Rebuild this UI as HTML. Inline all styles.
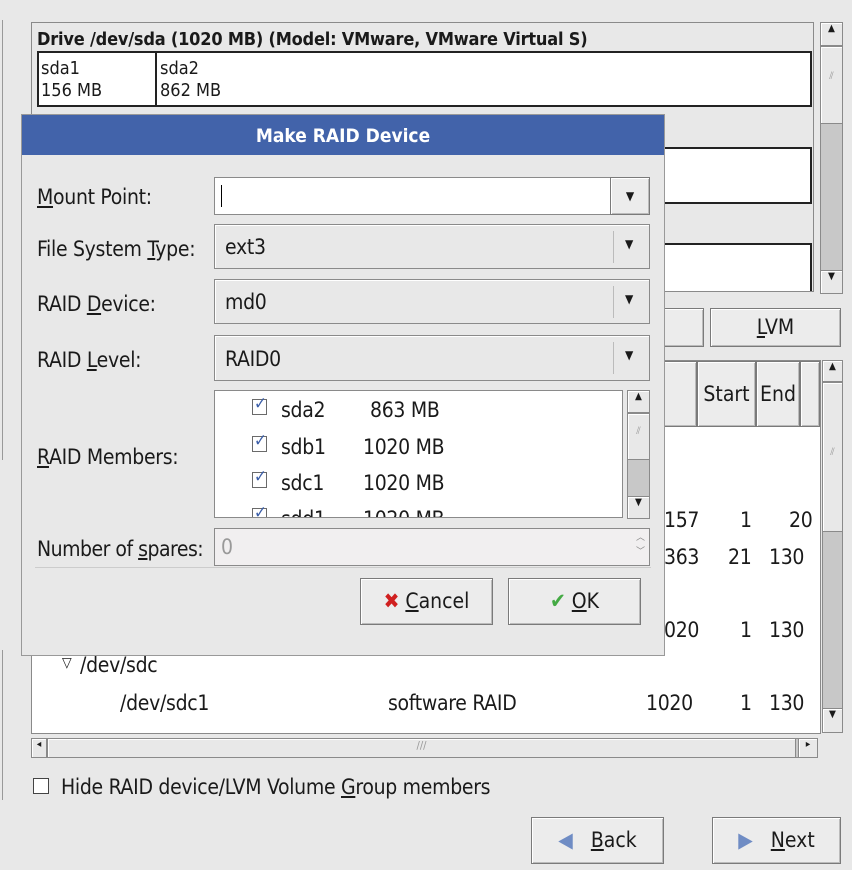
<!DOCTYPE html>
<html><head><style>
*{box-sizing:border-box;margin:0;padding:0}
body{width:852px;height:870px;background:#e8e8e8;position:relative;overflow:hidden;font-family:"DejaVu Sans","Liberation Sans",sans-serif;font-stretch:condensed;font-size:21px;color:#1a1a1a}
.a{position:absolute}
.white{background:#fff}
.bx{border:1px solid #8a8a8a}
.btn{position:absolute;border:1px solid #7a7a7a;background:#ececec;box-shadow:inset 1px 1px 0 #fff,inset -1px -1px 0 #bbb;text-align:center}
.t{position:absolute;white-space:nowrap;line-height:24px;letter-spacing:-0.3px}
.sm{font-size:18px;letter-spacing:0px}
u{text-decoration:underline}
.combo{position:absolute;border:1px solid #8a8a8a;background:#e8e8e8;box-shadow:inset 1px 1px 0 #fff}
.arr{position:absolute;font-size:12px;font-weight:bold}
.sb{position:absolute;background:#c8c8c8;border:1px solid #8a8a8a}
.sbb{position:absolute;background:#e8e8e8;border:1px solid #8a8a8a;box-shadow:inset 1px 1px 0 #fff;font-size:10px;text-align:center}
.cb{position:absolute;width:15px;height:16px;border:1px solid #6a6a6a;background:#fff}
.cb::after{content:"✓";position:absolute;left:1px;top:-6px;font-size:17px;color:#3b5ea8;font-weight:bold}
</style></head><body>
<div class="a" style="left:2px;top:20px;width:1px;height:440px;background:#999"></div>
<div class="a" style="left:2px;top:650px;width:1px;height:150px;background:#999"></div>
<div class="a bx" style="left:31px;top:22px;width:783px;height:270px;background:#e8e8e8"></div>
<div class="t sm" style="left:37px;top:28px;font-weight:bold;letter-spacing:-0.2px">Drive /dev/sda (1020 MB) (Model: VMware, VMware Virtual S)</div>
<div class="a white" style="left:37px;top:51px;width:775px;height:56px;border:2px solid #222"></div>
<div class="a" style="left:155px;top:51px;width:2px;height:56px;background:#222"></div>
<div class="t sm" style="left:41px;top:58px;line-height:22px">sda1<br>156 MB</div>
<div class="t sm" style="left:160px;top:58px;line-height:22px">sda2<br>862 MB</div>
<div class="a white" style="left:660px;top:147px;width:152px;height:57px;border:2px solid #222"></div>
<div class="a white" style="left:660px;top:243px;width:152px;height:48px;border:2px solid #222;border-bottom:none"></div>
<div class="sb" style="left:820px;top:22px;width:23px;height:272px"></div>
<div class="sbb" style="left:820px;top:22px;width:23px;height:24px">▲</div>
<div class="sbb" style="left:820px;top:46px;width:23px;height:78px;color:#999;padding-top:24px">⫽</div>
<div class="sbb" style="left:820px;top:270px;width:23px;height:24px">▼</div>
<div class="btn" style="left:640px;top:308px;width:64px;height:39px"></div>
<div class="btn" style="left:710px;top:308px;width:131px;height:39px;line-height:37px"><u>L</u>VM</div>
<div class="a bx white" style="left:31px;top:360px;width:790px;height:374px"></div>
<div class="btn" style="left:640px;top:361px;width:57px;height:66px"></div>
<div class="btn" style="left:697px;top:361px;width:59px;height:66px;line-height:64px">Start</div>
<div class="btn" style="left:756px;top:361px;width:44px;height:66px;line-height:64px">End</div>
<div class="btn" style="left:800px;top:361px;width:20px;height:66px"></div>
<div class="t" style="left:664px;top:508px">157</div><div class="t" style="left:740px;top:508px">1</div><div class="t" style="left:789px;top:508px">20</div>
<div class="t" style="left:664px;top:545px">363</div><div class="t" style="left:728px;top:545px">21</div><div class="t" style="left:769px;top:545px">130</div>
<div class="t" style="left:664px;top:618px">020</div><div class="t" style="left:740px;top:618px">1</div><div class="t" style="left:769px;top:618px">130</div>
<div class="t" style="left:62px;top:651px;font-size:14px">▽</div>
<div class="t" style="left:80px;top:653px">/dev/sdc</div>
<div class="t" style="left:120px;top:691px">/dev/sdc1</div>
<div class="t" style="left:388px;top:691px">software RAID</div>
<div class="t" style="left:646px;top:691px">1020</div><div class="t" style="left:740px;top:691px">1</div><div class="t" style="left:769px;top:691px">130</div>
<div class="sb" style="left:822px;top:360px;width:21px;height:373px"></div>
<div class="sbb" style="left:822px;top:360px;width:21px;height:22px">▲</div>
<div class="sbb" style="left:822px;top:382px;width:21px;height:150px;color:#999;padding-top:64px">⫽</div>
<div class="sbb" style="left:822px;top:708px;width:21px;height:25px">▼</div>
<div class="sb" style="left:31px;top:738px;width:787px;height:20px"></div>
<div class="sbb" style="left:31px;top:738px;width:16px;height:20px">◂</div>
<div class="sbb" style="left:47px;top:738px;width:749px;height:20px;color:#999;font-size:11px">///</div>
<div class="sbb" style="left:798px;top:738px;width:20px;height:20px">▸</div>
<div class="a" style="left:33px;top:778px;width:16px;height:16px;border:1px solid #444;background:#fff"></div>
<div class="t" style="left:61px;top:775px">Hide RAID device/LVM Volume <u>G</u>roup members</div>
<div class="btn" style="left:531px;top:817px;width:133px;height:47px;line-height:45px"><span style="color:#6f8cc4;margin-right:18px">◀</span><u>B</u>ack</div>
<div class="btn" style="left:712px;top:817px;width:129px;height:47px;line-height:45px"><span style="color:#6f8cc4;margin-right:18px">▶</span><u>N</u>ext</div>
<div class="a" style="left:21px;top:114px;width:644px;height:542px;background:#e8e8e8;border:1px solid #999"></div>
<div class="a" style="left:22px;top:115px;width:642px;height:40px;background:#4263aa;color:#fff;font-weight:bold;text-align:center;line-height:42px;font-size:19px">Make RAID Device</div>
<div class="t" style="left:37px;top:185px"><u>M</u>ount Point:</div>
<div class="a white bx" style="left:214px;top:177px;width:397px;height:38px"><div class="a" style="left:6px;top:7px;width:1px;height:22px;background:#000"></div></div>
<div class="btn" style="left:610px;top:177px;width:40px;height:38px;line-height:36px;font-size:12px;font-weight:bold">▼</div>
<div class="t" style="left:37px;top:237px">File System <u>T</u>ype:</div>
<div class="combo" style="left:214px;top:224px;width:436px;height:45px"><span class="t" style="left:10px;top:10px">ext3</span><div class="a" style="left:398px;top:6px;width:1px;height:32px;background:#bbb"></div><span class="arr" style="left:410px;top:12px">▼</span></div>
<div class="t" style="left:37px;top:292px">RAID <u>D</u>evice:</div>
<div class="combo" style="left:214px;top:279px;width:436px;height:45px"><span class="t" style="left:10px;top:10px">md0</span><div class="a" style="left:398px;top:6px;width:1px;height:32px;background:#bbb"></div><span class="arr" style="left:410px;top:12px">▼</span></div>
<div class="t" style="left:37px;top:348px">RAID <u>L</u>evel:</div>
<div class="combo" style="left:214px;top:335px;width:436px;height:46px"><span class="t" style="left:10px;top:11px">RAID0</span><div class="a" style="left:398px;top:6px;width:1px;height:32px;background:#bbb"></div><span class="arr" style="left:410px;top:12px">▼</span></div>
<div class="t" style="left:37px;top:445px"><u>R</u>AID Members:</div>
<div class="a white bx" style="left:214px;top:390px;width:409px;height:128px;overflow:hidden">
<div class="cb" style="left:37px;top:8px"></div><span class="t" style="left:66px;top:7px">sda2</span><span class="t" style="left:155px;top:7px">863 MB</span>
<div class="cb" style="left:37px;top:45px"></div><span class="t" style="left:66px;top:44px">sdb1</span><span class="t" style="left:148px;top:44px">1020 MB</span>
<div class="cb" style="left:37px;top:81px"></div><span class="t" style="left:66px;top:80px">sdc1</span><span class="t" style="left:148px;top:80px">1020 MB</span>
<div class="cb" style="left:37px;top:117px"></div><span class="t" style="left:66px;top:116px">sdd1</span><span class="t" style="left:148px;top:116px">1020 MB</span>
</div>
<div class="sb" style="left:627px;top:390px;width:23px;height:129px"></div>
<div class="sbb" style="left:627px;top:390px;width:23px;height:23px">▲</div>
<div class="sbb" style="left:627px;top:413px;width:23px;height:47px;color:#999;padding-top:12px">⫽</div>
<div class="sbb" style="left:627px;top:496px;width:23px;height:23px">▼</div>
<div class="t" style="left:37px;top:537px;letter-spacing:-0.5px">Number of <u>s</u>pares:</div>
<div class="a bx" style="left:214px;top:528px;width:436px;height:38px;background:#f1eff0"><span class="t" style="left:6px;top:6px;color:#999">0</span><span class="a" style="right:4px;top:2px;font-size:9px;color:#888;line-height:14px">︿<br>﹀</span></div>
<div class="a" style="left:35px;top:567px;width:616px;height:1px;background:#ccc"></div>
<div class="btn" style="left:360px;top:578px;width:133px;height:47px;line-height:45px"><span style="color:#d02020;font-weight:bold;margin-right:6px">✖</span><u>C</u>ancel</div>
<div class="btn" style="left:508px;top:578px;width:133px;height:47px;line-height:45px"><span style="color:#4a4;margin-right:6px">✔</span><u>O</u>K</div>
</body></html>
